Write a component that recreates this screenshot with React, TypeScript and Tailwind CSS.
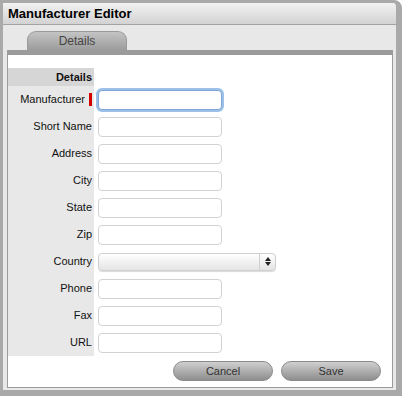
const fields = ["Manufacturer", "Short Name", "Address", "City", "State", "Zip", "Country", "Phone", "Fax", "URL"];

function Field({ label }: { label: string }) {
  if (label === "Country") {
    return (
      <div className="flex h-[27px] items-center pl-1">
        <div className="flex h-[18px] w-[178px] items-center rounded-[4px] border border-[#d0d0d0] bg-gradient-to-b from-[#ffffff] to-[#e4e4e4] shadow-[0_1px_1px_rgba(0,0,0,0.15)]">
          <div className="flex-1" />
          <div className="flex h-full w-[16px] flex-col items-center justify-center gap-[1px] border-l border-[#cfcfcf]">
            <div className="h-0 w-0 border-x-[3px] border-b-[4px] border-x-transparent border-b-[#222]" />
            <div className="h-0 w-0 border-x-[3px] border-t-[4px] border-x-transparent border-t-[#222]" />
          </div>
        </div>
      </div>
    );
  }
  const focused = label === "Manufacturer";
  return (
    <div className="flex h-[27px] items-center pl-1">
      <input
        type="text"
        className={
          focused
            ? "h-[20px] w-[124px] rounded-[4px] border border-[#7fa7d6] bg-white shadow-[0_0_0_2px_#9cc0e8] outline-none"
            : "h-[20px] w-[124px] rounded-[4px] border border-[#d2d2d2] bg-white outline-none"
        }
      />
    </div>
  );
}

export default function App() {
  return (
    <div className="w-[402px] h-[396px] bg-white font-['Liberation_Sans',Arial,sans-serif] text-[11px] text-[#111]">
      <div className="flex h-full flex-col rounded-tr-[8px] border-l-[3px] border-t-[3px] border-r-[6px] border-b-[6px] border-[#a9a9a9] bg-[#e8e8e8]">
        <div className="flex h-[22px] items-center rounded-tr-[5px] border-b border-[#a3a3a3] bg-gradient-to-b from-[#f2f2f2] to-[#d2d2d2] pl-[5px] text-[13px] font-bold text-black">
          Manufacturer Editor
        </div>
        <div className="flex flex-1 flex-col pl-[4px] pr-[3px] pb-[2px] pt-[6px]">
          <div className="ml-[20px] flex h-[19px] w-[100px] items-center justify-center rounded-t-[9px] border border-b-0 border-[#9a9a9a] bg-gradient-to-b from-[#c4c4c4] to-[#9c9c9c] text-[12px] text-[#444]">
            Details
          </div>
          <div className="flex flex-1 flex-col border-x border-b border-t-[5px] border-[#9b9b9b] bg-white pt-[13px]">
            <div className="flex">
              <div className="w-[86px] bg-[#e8e8e8]">
                <div className="flex h-[18px] items-center justify-end bg-[#d6d6d6] pr-[2px] font-bold">Details</div>
                {fields.map((f) => (
                  <div key={f} className="flex h-[27px] items-center justify-end pr-[2px]">
                    <span>{f}</span>
                    {f === "Manufacturer" && <span className="ml-[4px] h-[13px] w-[3px] bg-[#d40000]" />}
                  </div>
                ))}
              </div>
              <div className="pt-[18px]">
                {fields.map((f) => (
                  <Field key={f} label={f} />
                ))}
              </div>
            </div>
            <div className="mt-[5px] flex justify-end gap-[8px] pr-[11px]">
              <button className="h-[20px] w-[100px] rounded-full border border-[#8a8a8a] bg-gradient-to-b from-[#d0d0d0] to-[#8e8e8e] text-[11px] text-[#333]">
                Cancel
              </button>
              <button className="h-[20px] w-[100px] rounded-full border border-[#8a8a8a] bg-gradient-to-b from-[#d0d0d0] to-[#8e8e8e] text-[11px] text-[#333]">
                Save
              </button>
            </div>
          </div>
        </div>
      </div>
    </div>
  );
}
